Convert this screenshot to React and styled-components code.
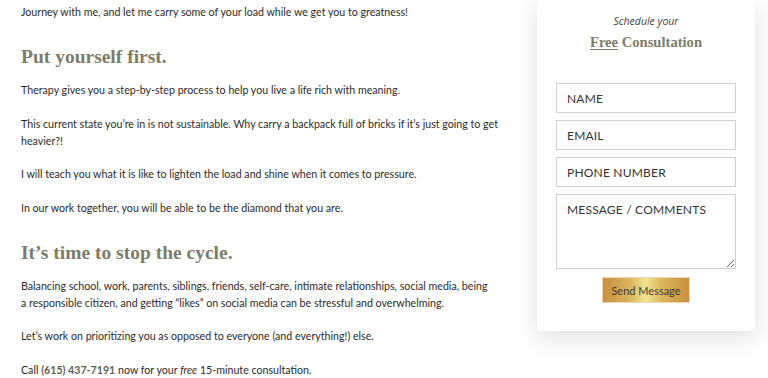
import React from 'react';
import styled, { createGlobalStyle } from 'styled-components';

const GlobalStyle = createGlobalStyle`
  body {
    margin: 0;
    background: #fff;
    font-family: Lato, "Liberation Sans", sans-serif;
    color: #2b2b2b;
  }
`;

const Page = styled.div`
  display: flex;
  align-items: flex-start;
  width: 768px;
  height: 378px;
  overflow: hidden;
`;

const Main = styled.main`
  width: 478px;
  padding: 3px 0 0 21px;
  flex-shrink: 0;
`;

const Text = styled.p`
  margin: 0 0 16.6px;
  font-size: 10.65px;
  line-height: 17px;
`;

const Heading = styled.h2`
  margin: 26px 0 13px;
  font-family: "Liberation Serif", serif;
  font-weight: 700;
  font-size: 19.5px;
  line-height: 22px;
  color: #7b7d69;
`;

const Phone = styled.a`
  color: #5f6052;
  font-weight: 700;
  text-decoration: none;
`;

const Card = styled.aside`
  margin-left: 38px;
  width: 218px;
  padding: 14px 19px 28px;
  box-sizing: border-box;
  background: #fff;
  box-shadow: 0 6px 22px rgba(0, 0, 0, 0.13);
  display: flex;
  flex-direction: column;
  align-items: center;
`;

const Kicker = styled.div`
  font-family: "Open Sans", sans-serif;
  font-style: italic;
  font-size: 10.5px;
  color: #444;
  line-height: 14px;
`;

const Title = styled.div`
  margin-top: 5px;
  font-family: "Liberation Serif", serif;
  font-weight: 700;
  font-size: 14.6px;
  line-height: 18px;
  color: #7b7d69;

  u {
    text-underline-offset: 2px;
  }
`;

const Form = styled.form`
  margin-top: 32px;
  width: 100%;
  display: flex;
  flex-direction: column;
  align-items: center;
  gap: 7px;
`;

const Field = styled.input`
  width: 100%;
  height: 30px;
  box-sizing: border-box;
  border: 1px solid #cfcfcf;
  padding: 0 10px;
  font-family: Lato, sans-serif;
  font-size: 12px;
  letter-spacing: 0.2px;
  outline: none;

  &::placeholder {
    color: #333;
  }
`;

const Area = styled.textarea`
  width: 100%;
  height: 75px;
  box-sizing: border-box;
  border: 1px solid #cfcfcf;
  padding: 7px 10px;
  font-family: Lato, sans-serif;
  font-size: 12px;
  letter-spacing: 0.2px;
  resize: vertical;
  outline: none;

  &::placeholder {
    color: #333;
  }
`;

const Button = styled.button`
  margin-top: 1px;
  width: 88px;
  height: 26px;
  box-sizing: border-box;
  border: 1px solid #ead9b4;
  background: linear-gradient(90deg, #c98f3f 0%, #dcb65e 32%, #f1e592 50%, #dcb65e 68%, #c98f3f 100%);
  color: #3a3a2e;
  font-family: Lato, sans-serif;
  font-size: 11px;
  padding: 0;
`;

const App = () => (
  <>
    <GlobalStyle />
    <Page>
      <Main>
        <Text>Journey with me, and let me carry some of your load while we get you to greatness!</Text>
        <Heading>Put yourself first.</Heading>
        <Text>Therapy gives you a step-by-step process to help you live a life rich with meaning.</Text>
        <Text>This current state you’re in is not sustainable. Why carry a backpack full of bricks if it’s just going to get heavier?!</Text>
        <Text>I will teach you what it is like to lighten the load and shine when it comes to pressure.</Text>
        <Text>In our work together, you will be able to be the diamond that you are.</Text>
        <Heading>It’s time to stop the cycle.</Heading>
        <Text>Balancing school, work, parents, siblings, friends, self-care, intimate relationships, social media, being a{'\u00a0'}responsible citizen, and getting “likes” on social media can be stressful and overwhelming.</Text>
        <Text>Let’s work on prioritizing you as opposed to everyone (and everything!) else.</Text>
        <Text>Call <Phone href="#">(615) 437-7191</Phone> now for your <em>free</em> 15-minute consultation.</Text>
      </Main>
      <Card>
        <Kicker>Schedule your</Kicker>
        <Title><u>Free</u> Consultation</Title>
        <Form onSubmit={e => e.preventDefault()}>
          <Field placeholder="NAME" />
          <Field placeholder="EMAIL" />
          <Field placeholder="PHONE NUMBER" />
          <Area placeholder="MESSAGE / COMMENTS" />
          <Button type="submit">Send Message</Button>
        </Form>
      </Card>
    </Page>
  </>
);

export default App;
